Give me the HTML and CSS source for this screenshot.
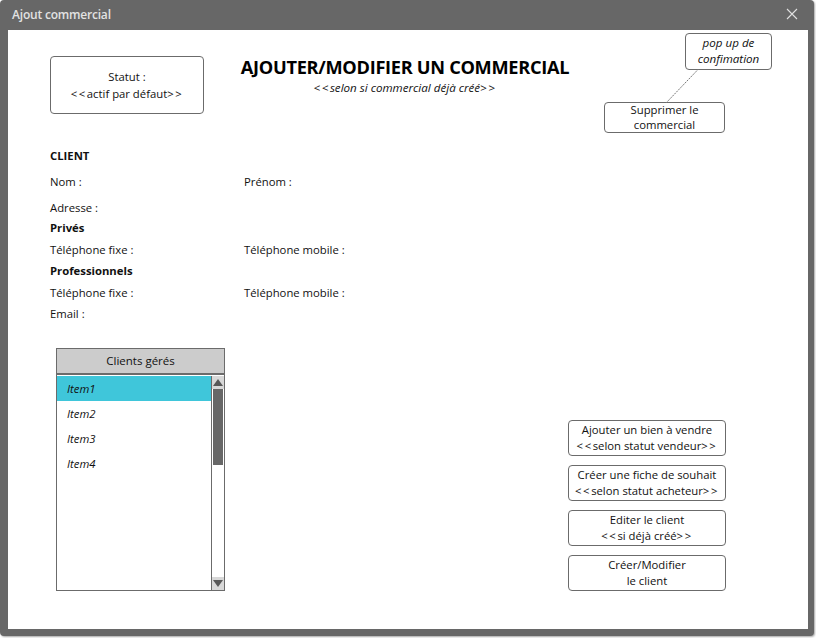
FILE: index.html
```html
<!DOCTYPE html>
<html lang="fr">
<head>
<meta charset="utf-8">
<title>Ajout commercial</title>
<link rel="stylesheet" href="styles.css">
</head>
<body>
<div class="window">
  <div class="titlebar">
    <span class="wtitle">Ajout commercial</span>
    <svg class="close" width="12" height="12" viewBox="0 0 12 12"><path d="M1 1L11 11M11 1L1 11" stroke="#e0e0e0" stroke-width="1.1" fill="none"/></svg>
  </div>
  <div class="content">
    <div class="header">
      <div class="box statut">Statut :<br><span class="ch">&lt;&lt;</span>actif par défaut<span class="ch">&gt;&gt;</span></div>
      <div class="heading">
        <h1 class="title">AJOUTER/MODIFIER UN COMMERCIAL</h1>
        <div class="subtitle"><span class="ch">&lt;&lt;</span>selon si commercial déjà créé<span class="ch">&gt;&gt;</span></div>
      </div>
      <div class="rightgroup">
        <div class="box popup">pop up de<br>confimation</div>
        <div class="box suppr">Supprimer le<br>commercial</div>
        <svg class="connector" width="40" height="40" viewBox="0 0 40 40"><line x1="33.5" y1="0" x2="1" y2="34" stroke="#777" stroke-width="1" stroke-dasharray="2 1"/></svg>
      </div>
    </div>

    <div class="client">
      <div class="row r-client"><b>CLIENT</b></div>
      <div class="row r-nom"><span class="c1">Nom :</span><span>Prénom :</span></div>
      <div class="row r-adr"><span class="c1">Adresse :</span></div>
      <div class="row r-priv"><b>Privés</b></div>
      <div class="row r-tel1"><span class="c1">Téléphone fixe :</span><span>Téléphone mobile :</span></div>
      <div class="row r-pro"><b>Professionnels</b></div>
      <div class="row r-tel2"><span class="c1">Téléphone fixe :</span><span>Téléphone mobile :</span></div>
      <div class="row r-mail"><span class="c1">Email :</span></div>
    </div>

    <div class="bottom">
      <div class="listbox">
        <div class="listhead">Clients gérés</div>
        <div class="listbody">
          <ul class="items">
            <li class="item selected">Item1</li>
            <li class="item">Item2</li>
            <li class="item">Item3</li>
            <li class="item">Item4</li>
          </ul>
          <div class="scrollbar">
            <div class="sbtn"><span class="tri up"></span></div>
            <div class="thumb"></div>
            <div class="track"></div>
            <div class="sbtn"><span class="tri down"></span></div>
          </div>
        </div>
      </div>
      <div class="actions">
        <div class="box btn">Ajouter un bien à vendre<br><span class="ch">&lt;&lt;</span>selon statut vendeur<span class="ch">&gt;&gt;</span></div>
        <div class="box btn">Créer une fiche de souhait<br><span class="ch">&lt;&lt;</span>selon statut acheteur<span class="ch">&gt;&gt;</span></div>
        <div class="box btn">Editer le client<br><span class="ch">&lt;&lt;</span>si déjà créé<span class="ch">&gt;&gt;</span></div>
        <div class="box btn">Créer/Modifier<br>le client</div>
      </div>
    </div>
  </div>
</div>
</body>
</html>
```
FILE: styles.css
```css
* { box-sizing: border-box; }
html, body { margin: 0; padding: 0; background: #ffffff; }
body {
  font-family: "Open Sans", "Noto Sans", sans-serif;
  font-size: 11.3px;
  color: #111;
  width: 816px;
  height: 638px;
}
.window {
  width: 814px;
  height: 636px;
  background: #676767;
  border-radius: 4px;
  box-shadow: 1px 1px 2px rgba(0,0,0,0.35);
  display: flex;
  flex-direction: column;
}
.titlebar {
  height: 30px;
  display: flex;
  align-items: center;
  justify-content: space-between;
  padding: 0 16px 1px 12px;
  flex: none;
}
.wtitle {
  color: #e2e2e2;
  font-weight: 600;
  font-size: 12px;
  letter-spacing: -0.2px;
}
.close { display: block; margin-top: -1px; }
.content {
  background: #fff;
  margin: 0 6px 0 8px;
  height: 599px;
  padding-left: 42px;
  position: relative;
}
.ch { letter-spacing: 1.6px; }
.box {
  border: 1px solid #6b6b6b;
  border-radius: 4px;
  text-align: center;
  background: #fff;
  line-height: 16px;
}
.header {
  display: flex;
  align-items: flex-start;
  height: 102px;
}
.statut {
  margin-top: 26px;
  width: 154px;
  height: 58px;
  padding-top: 11px;
  line-height: 17px;
}
.heading {
  margin-left: 34px;
  margin-top: 24.5px;
  width: 334px;
  text-align: center;
}
.title {
  margin: 0;
  font-size: 18.2px;
  font-weight: 700;
  line-height: 25px;
  letter-spacing: -0.3px;
  white-space: nowrap;
  color: #000;
}
.subtitle {
  font-style: italic;
  font-size: 11.6px;
  line-height: 16px;
  margin-top: 0;
  white-space: nowrap;
}
.rightgroup {
  margin-left: 32px;
  width: 168px;
  display: flex;
  flex-direction: column;
  position: relative;
}
.popup {
  align-self: flex-end;
  margin-top: 3px;
  width: 87px;
  height: 37px;
  font-style: italic;
  font-size: 11.6px;
  line-height: 16px;
  padding-top: 1px;
}
.suppr {
  margin-top: 32px;
  width: 121px;
  height: 31px;
  line-height: 14.5px;
  padding-top: 0;
}
.connector {
  position: absolute;
  left: 61px;
  top: 39px;
}
.client {
  margin-top: 14px;
}
.row {
  display: flex;
  height: 20px;
  line-height: 20px;
}
.row b { font-weight: 700; }
.c1 { width: 194px; }
.r-nom { margin-top: 6px; }
.r-adr { margin-top: 6px; }
.r-priv { margin-top: 0; }
.r-tel1 { margin-top: 2px; }
.r-pro { margin-top: 1px; }
.r-tel2 { margin-top: 2px; }
.r-mail { margin-top: 1px; }
.bottom {
  margin-top: 24px;
  display: flex;
  align-items: flex-end;
}
.listbox {
  margin-left: 6px;
  width: 169px;
  height: 243px;
  display: flex;
  flex-direction: column;
}
.listhead {
  height: 27px;
  background: #cccccc;
  border: 1px solid #6b6b6b;
  border-bottom: 2px solid #6b6b6b;
  text-align: center;
  line-height: 24px;
  font-size: 11.5px;
}
.listbody {
  flex: 1;
  border: 1px solid #6b6b6b;
  border-top: none;
  display: flex;
}
.items {
  list-style: none;
  margin: 0;
  padding: 1px 0 0 0;
  flex: 1;
}
.item {
  height: 25px;
  line-height: 25px;
  padding-left: 10px;
  font-style: italic;
}
.selected { background: #3fc6da; }
.scrollbar {
  width: 13px;
  border-left: 1px solid #6b6b6b;
  display: flex;
  flex-direction: column;
  margin-top: 1px;
}
.sbtn {
  height: 13px;
  background: #d8d8d8;
  display: flex;
  align-items: center;
  justify-content: center;
}
.thumb {
  height: 76px;
  background: #676767;
  margin: 0 1px;
}
.track { flex: 1; }
.tri { width: 0; height: 0; border-left: 5px solid transparent; border-right: 5px solid transparent; }
.tri.up { border-bottom: 7px solid #585858; }
.tri.down { border-top: 7px solid #585858; }
.actions {
  margin-left: 343px;
  width: 158px;
  display: flex;
  flex-direction: column;
  gap: 9px;
}
.btn {
  height: 36px;
  line-height: 16px;
  padding-top: 1px;
}
```
